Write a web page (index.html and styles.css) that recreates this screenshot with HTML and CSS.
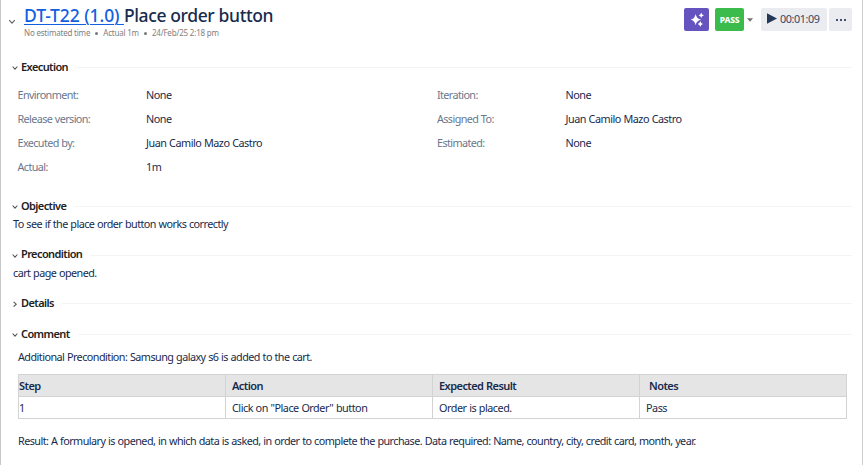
FILE: index.html
```html
<!DOCTYPE html>
<html lang="en">
<head>
<meta charset="utf-8">
<title>DT-T22 Place order button</title>
<link rel="stylesheet" href="styles.css">
</head>
<body>
<main class="panel">
  <header class="header">
    <svg class="toggle" viewBox="0 0 8 6"><path d="M1.2 1.2 4 4.2 6.8 1.2"/></svg>
    <div class="heading">
      <h1 class="title"><a class="key" href="#">DT-T22 (1.0)&nbsp;</a><span class="name">Place order button</span></h1>
      <div class="meta"><span>No estimated time</span><i class="dot"></i><span>Actual 1m</span><i class="dot"></i><span>24/Feb/25 2:18 pm</span></div>
    </div>
    <div class="actions">
      <button class="ai" aria-label="Assist"><svg viewBox="0 0 25 23"><path d="M11.6 6Q12.6 11 17.2 11.7Q12.6 12.4 11.6 17.2Q10.7 12.4 6.6 11.7Q10.7 11 11.6 6Z"/><path d="M17.2 4.4Q17.7 6.8 20 7.2Q17.7 7.6 17.2 10Q16.8 7.6 14.6 7.2Q16.8 6.8 17.2 4.4Z"/><path d="M16.3 13Q16.8 15.5 19 15.9Q16.8 16.3 16.3 18.8Q15.8 16.3 13.6 15.9Q15.8 15.5 16.3 13Z"/></svg></button>
      <button class="status">PASS</button>
      <svg class="caret" viewBox="0 0 6 4"><path d="M0 .3H6L3 3.7Z"/></svg>
      <button class="timer"><svg viewBox="0 0 10 11"><path d="M0 .3 10 5.5 0 10.7Z"/></svg><span>00:01:09</span></button>
      <button class="more" aria-label="More"><i></i><i></i><i></i></button>
    </div>
  </header>

  <section class="section execution">
    <h2 class="bar"><svg class="chev" viewBox="0 0 6 5"><path d="M.6 1 3 3.6 5.4 1"/></svg><span>Execution</span></h2>
    <dl class="fields">
      <dt>Environment:</dt><dd>None</dd><dt>Iteration:</dt><dd>None</dd>
      <dt>Release version:</dt><dd>None</dd><dt>Assigned To:</dt><dd>Juan Camilo Mazo Castro</dd>
      <dt>Executed by:</dt><dd>Juan Camilo Mazo Castro</dd><dt>Estimated:</dt><dd>None</dd>
      <dt>Actual:</dt><dd>1m</dd>
    </dl>
  </section>

  <section class="section objective">
    <h2 class="bar"><svg class="chev" viewBox="0 0 6 5"><path d="M.6 1 3 3.6 5.4 1"/></svg><span>Objective</span></h2>
    <p class="text">To see if the place order button works correctly</p>
  </section>

  <section class="section precondition">
    <h2 class="bar"><svg class="chev" viewBox="0 0 6 5"><path d="M.6 1 3 3.6 5.4 1"/></svg><span>Precondition</span></h2>
    <p class="text">cart page opened.</p>
  </section>

  <section class="section details">
    <h2 class="bar"><svg class="chev" viewBox="0 0 6 6"><path d="M1.6 .8 4.2 3.2 1.6 5.6"/></svg><span>Details</span></h2>
  </section>

  <section class="section comment">
    <h2 class="bar"><svg class="chev" viewBox="0 0 6 5"><path d="M.6 1 3 3.6 5.4 1"/></svg><span>Comment</span></h2>
    <p class="note">Additional Precondition: Samsung galaxy s6 is added to the cart.</p>
    <table class="steps">
      <thead><tr><th>Step</th><th>Action</th><th>Expected Result</th><th class="notes">Notes</th></tr></thead>
      <tbody><tr><td>1</td><td>Click on "Place Order" button</td><td>Order is placed.</td><td>Pass</td></tr></tbody>
    </table>
    <p class="result">Result: A formulary is opened, in which data is asked, in order to complete the purchase. Data required: Name, country, city, credit card, month, year.</p>
  </section>
</main>
</body>
</html>
```

FILE: styles.css
```css
* { box-sizing: border-box; }

body {
  margin: 0;
  background: #fff;
  color: #172b4d;
  font: 10.8px/16px "Noto Sans", sans-serif;
  letter-spacing: -0.54px;
  word-spacing: 0.35px;
}

h1, h2, p, dl, dd { margin: 0; }

button {
  border: 0;
  padding: 0;
  font: inherit;
  letter-spacing: inherit;
  color: inherit;
}

.panel {
  width: 863px;
  height: 465px;
  overflow: hidden;
  border-left: 1px solid #c8c8c8;
  border-right: 1px solid #d0d0d0;
}

.header {
  display: flex;
  height: 58px;
  padding: 0 10px 0 7px;
}

.toggle {
  width: 8px;
  height: 6px;
  margin: 19px 8px 0 0;
  fill: none;
  stroke: #666;
  stroke-width: 1.2;
}

.heading { flex: 1; white-space: nowrap; }

.title {
  display: flex;
  height: 26px;
  padding-top: 3px;
  font-size: 17.5px;
  line-height: 24px;
  font-weight: 500;
  word-spacing: 0;
}

.key {
  color: #1260e0;
  text-underline-offset: 2px;
  text-decoration-thickness: 1px;
  letter-spacing: -0.08px;
}

.name { letter-spacing: -0.38px; }

.meta {
  display: flex;
  align-items: center;
  height: 14px;
  color: #808080;
  font-size: 8px;
  letter-spacing: -0.2px;
  word-spacing: 0;
}

.dot {
  width: 3px;
  height: 3px;
  margin: 0 5px;
  border-radius: 50%;
  background: #777;
}

.actions { display: flex; align-items: flex-start; padding-top: 8px; }
.actions button { height: 23px; border-radius: 2px; }

.actions .ai { width: 25px; margin-right: 6px; background: #6554c0; }
.ai svg { display: block; width: 25px; height: 23px; fill: #fff; }

.actions .status {
  width: 29px;
  background: #3abb4b;
  color: #fff;
  font-size: 8.5px;
  font-weight: 800;
  letter-spacing: -0.25px;
}

.caret { width: 6px; height: 4px; margin: 10px 8px 0 3px; fill: #707070; }

.actions .timer {
  display: flex;
  align-items: center;
  width: 66px;
  margin-right: 2px;
  padding: 0 0 1px 6px;
  background: #ebecf0;
  color: #344563;
  letter-spacing: -0.4px;
}

.timer svg { width: 10px; height: 11px; margin: -2px 3px 0 0; fill: #253858; }

.actions .more {
  display: flex;
  justify-content: center;
  align-items: center;
  gap: 2px;
  width: 23px;
  background: #ebecf0;
}

.more i { width: 2px; height: 2px; background: #42526e; }

.bar {
  display: flex;
  align-items: center;
  height: 18px;
  padding: 0 10px 0 11px;
  font-size: 11px;
  font-weight: 600;
  color: #222;
  letter-spacing: -0.6px;
}

.bar::after {
  content: "";
  flex: 1;
  height: 1px;
  margin: 1px 0 0 8px;
  background: #f4f4f4;
}

.chev {
  width: 6px;
  height: 6px;
  margin: 2px 3px 0 0;
  fill: none;
  stroke: #555;
  stroke-width: 1.1;
}

.execution { height: 139px; }

.fields {
  display: grid;
  grid-template-columns: 128.5px 291px 128.5px 1fr;
  grid-auto-rows: 24px;
  padding: 7px 0 0 16.5px;
  line-height: 24px;
}

.fields dt { color: #6b778c; letter-spacing: -0.6px; }
.fields dd { letter-spacing: -0.48px; }

.objective { height: 48px; }
.precondition { height: 49px; }
.precondition .text { padding-top: 1px; }
.precondition .chev { margin-top: 4px; }
.precondition .bar::after { margin-top: 3px; }
.details { height: 31px; }
.text { padding-left: 12px; line-height: 18px; }
.note { height: 31px; padding: 6px 0 0 17px; }

.steps {
  width: 829px;
  margin-left: 17px;
  border-collapse: collapse;
  table-layout: fixed;
}

.steps th, .steps td {
  height: 22px;
  padding: 0 6px;
  border: 1px solid #d3d3d3;
  line-height: 20px;
  text-align: left;
}

.steps th {
  padding-bottom: 1px;
  background: #e5e5e5;
  font-size: 11px;
  font-weight: 600;
  line-height: 19px;
  letter-spacing: -0.56px;
}

.steps td { padding-bottom: 1px; line-height: 19px; letter-spacing: -0.48px; }
.steps th:first-child, .steps td:first-child { padding-left: 0; }
.steps .notes { padding-left: 9px; }

.result { padding: 14px 0 0 17px; white-space: nowrap; }
```
